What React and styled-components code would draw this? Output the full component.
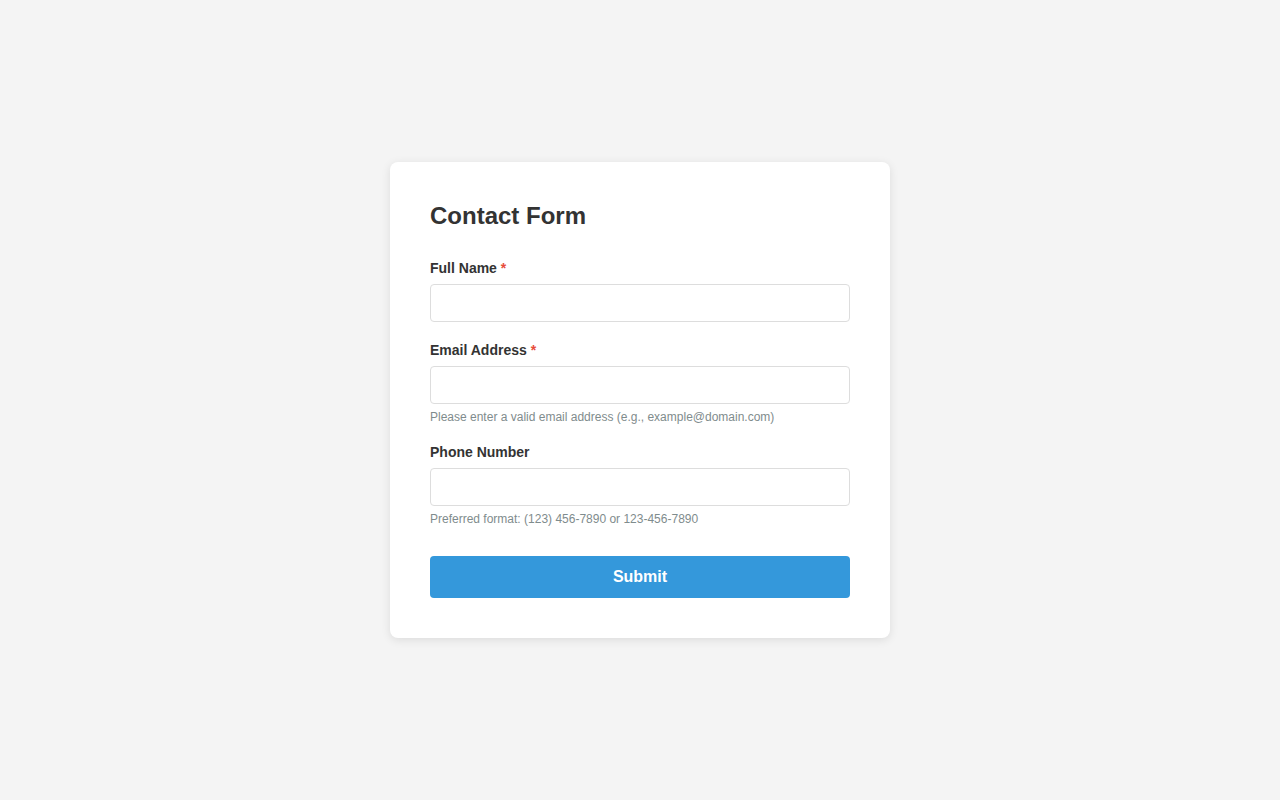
import React from "react";
import styled, { createGlobalStyle } from "styled-components";

const GlobalStyle = createGlobalStyle`
  * { box-sizing: border-box; }
  html, body { margin: 0; padding: 0; }
  body {
    background: #f4f4f4;
    font-family: "Liberation Sans", Arial, Helvetica, sans-serif;
    color: #333;
  }
`;

const Page = styled.div`
  min-height: 800px;
  display: flex;
  align-items: center;
  justify-content: center;
`;

const Card = styled.div`
  width: 500px;
  background: #fff;
  border-radius: 8px;
  box-shadow: 0 2px 10px rgba(0, 0, 0, 0.1);
  padding: 40px;
`;

const Title = styled.h2`
  margin: 0 0 31px;
  font-size: 24px;
  line-height: 28px;
  font-weight: 700;
  color: #333;
`;

const Form = styled.form`
  display: flex;
  flex-direction: column;
`;

const Group = styled.div`
  display: flex;
  flex-direction: column;
  margin-bottom: ${(p) => (p.$last ? "30px" : "21px")};
`;

const Label = styled.label`
  font-size: 14px;
  line-height: 15px;
  font-weight: 700;
  color: #333;
  margin-bottom: 8px;
`;

const Required = styled.span`
  color: #e74c3c;
`;

const Input = styled.input`
  width: 100%;
  height: 38px;
  padding: 10px;
  border: 1px solid #ddd;
  border-radius: 4px;
  font-size: 14px;
  font-family: inherit;
  background: #fff;
  outline: none;
`;

const Help = styled.small`
  display: block;
  margin-top: 6px;
  font-size: 12px;
  line-height: 14px;
  color: #7f8c8d;
`;

const Button = styled.button`
  width: 100%;
  height: 42px;
  border: none;
  border-radius: 4px;
  background: #3498db;
  color: #fff;
  font-family: inherit;
  font-size: 16px;
  font-weight: 700;
  cursor: pointer;
`;

export default function App() {
  return (
    <>
      <GlobalStyle />
      <Page>
        <Card>
          <Title>Contact Form</Title>
          <Form onSubmit={(e) => e.preventDefault()}>
            <Group>
              <Label htmlFor="name">
                Full Name <Required>*</Required>
              </Label>
              <Input id="name" type="text" />
            </Group>
            <Group>
              <Label htmlFor="email">
                Email Address <Required>*</Required>
              </Label>
              <Input id="email" type="email" />
              <Help>Please enter a valid email address (e.g., example@domain.com)</Help>
            </Group>
            <Group $last>
              <Label htmlFor="phone">Phone Number</Label>
              <Input id="phone" type="tel" />
              <Help>Preferred format: (123) 456-7890 or 123-456-7890</Help>
            </Group>
            <Button type="submit">Submit</Button>
          </Form>
        </Card>
      </Page>
    </>
  );
}
